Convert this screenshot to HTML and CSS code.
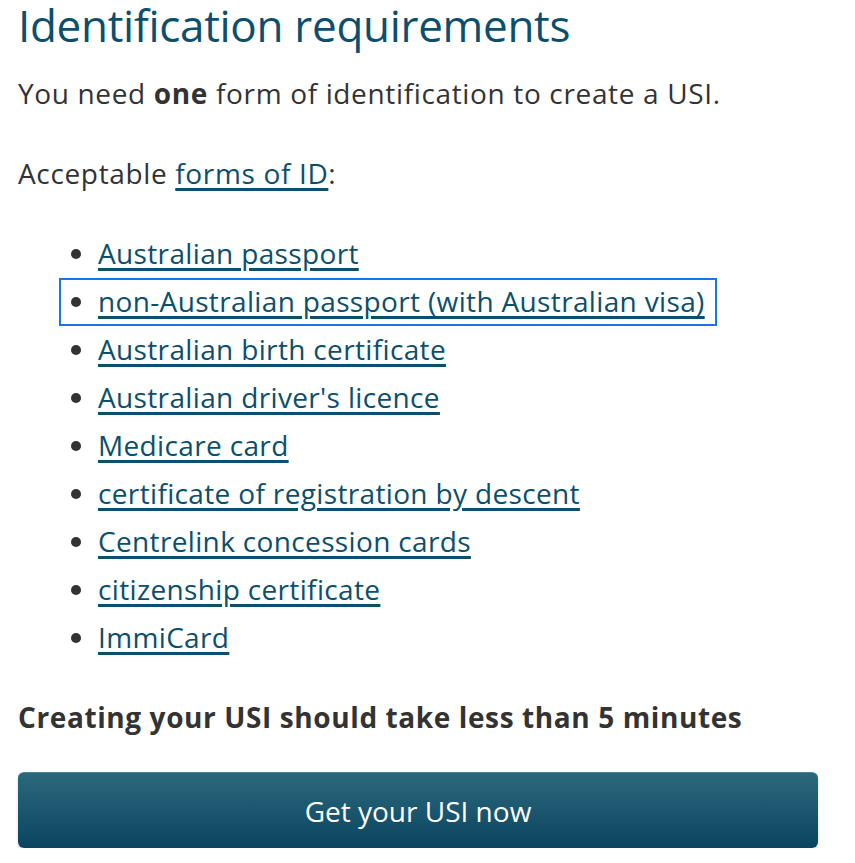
FILE: index.html
```html
<!DOCTYPE html>
<html lang="en">
<head>
<meta charset="utf-8">
<title>Identification requirements</title>
<link rel="stylesheet" href="styles.css">
</head>
<body>
<main class="content">
  <h1 class="title">Identification requirements</h1>
  <p class="lead">You need <strong>one</strong> form of identification to create a USI.</p>
  <p class="lead">Acceptable <a href="#">forms of ID</a>:</p>
  <ul class="id-list">
    <li><a href="#">Australian passport</a></li>
    <li class="focused"><a href="#">non-Australian passport (with Australian visa)</a></li>
    <li><a href="#">Australian birth certificate</a></li>
    <li><a href="#">Australian driver's licence</a></li>
    <li><a href="#">Medicare card</a></li>
    <li><a href="#">certificate of registration by descent</a></li>
    <li><a href="#">Centrelink concession cards</a></li>
    <li><a href="#">citizenship certificate</a></li>
    <li><a href="#">ImmiCard</a></li>
  </ul>
  <h2 class="subtitle">Creating your USI should take less than 5 minutes</h2>
  <a class="cta" href="#">Get your USI now</a>
</main>
</body>
</html>
```
FILE: styles.css
```css
html, body {
  margin: 0;
  padding: 0;
  background: #ffffff;
}
body {
  font-family: "Open Sans", "Noto Sans", sans-serif;
  color: #333333;
}
.content {
  width: 800px;
  padding: 0 0 0 18px;
  display: flex;
  flex-direction: column;
}
.title {
  margin: 0;
  font-weight: 400;
  font-size: 44px;
  line-height: 50px;
  color: #0b4f6c;
  letter-spacing: -0.3px;
}
.lead {
  margin: 23px 0 0;
  font-size: 28px;
  line-height: 40px;
  letter-spacing: 0.65px;
}
.lead + .lead {
  margin-top: 40px;
}
.lead strong {
  font-weight: 700;
}
a {
  color: #0b4f6c;
  text-decoration: underline;
  text-decoration-thickness: 3px;
  text-underline-offset: 4px;
  text-decoration-color: #0b4f6c;
}
.id-list {
  margin: 36px 0 0;
  padding: 0 0 0 80px;
  font-size: 28px;
  line-height: 48px;
  letter-spacing: 0.35px;
}
.id-list li::marker {
  color: #333;
}
.focused {
  position: relative;
  width: fit-content;
}
.focused::before {
  content: "";
  position: absolute;
  left: -39px;
  right: -12px;
  top: 1px;
  bottom: -1px;
  border: 2px solid #1a73e8;
  pointer-events: none;
}
.subtitle {
  margin: 36px 0 0;
  font-weight: 700;
  font-size: 28px;
  line-height: 40px;
  color: #333;
  letter-spacing: 0.6px;
}
.cta {
  margin-top: 35px;
  display: flex;
  align-items: center;
  justify-content: center;
  height: 76px;
  box-sizing: border-box;
  border-radius: 6px;
  background: linear-gradient(#2b687d, #0a4560);
  border-top: 1px solid #4d8396;
  box-shadow: 0 2px 3px rgba(0,0,0,0.18);
  color: #ffffff;
  text-decoration: none;
  font-size: 28px;
  letter-spacing: 0;
}
```
